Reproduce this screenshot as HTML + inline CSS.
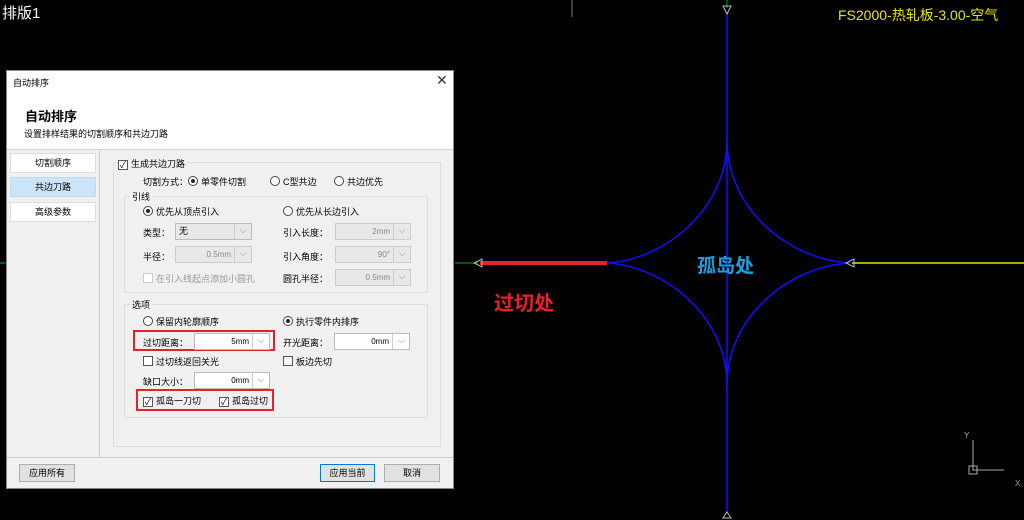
<!DOCTYPE html>
<html><head><meta charset="utf-8"><style>
*{margin:0;padding:0;box-sizing:border-box}
body{width:1024px;height:520px;background:#000;position:relative;overflow:hidden;font-family:"Liberation Sans","Noto Sans CJK SC",sans-serif;font-size:9px;color:#000}
.a{position:absolute;white-space:nowrap}
.sel{position:absolute;height:17px;border:1px solid #bbb;background:#fff;font-size:8px;text-align:right;padding-right:20px;line-height:15px}
.sel.dis{background:#e8e8e8;color:#888;border-color:#ccc}
.sel::after{content:"⌵";position:absolute;right:0;top:0;width:16px;height:15px;border-left:1px solid #ccc;text-align:center;color:#888;font-size:9px;line-height:12px}
.cb{display:inline-block;width:10px;height:10px;border:1px solid #555;background:#fff;vertical-align:-1px;margin-right:3px;font-size:9px;line-height:8px;text-align:center}
.rd{display:inline-block;width:10px;height:10px;border:1px solid #444;border-radius:50%;background:#fff;vertical-align:-1px;margin-right:3px;position:relative}
.rd.on::after{content:"";position:absolute;left:2px;top:2px;width:4px;height:4px;border-radius:50%;background:#222}
.btn{position:absolute;height:18px;border:1px solid #adadad;background:#e1e1e1;text-align:center;line-height:16px;font-size:9px}
.nav{position:absolute;left:10px;width:86px;height:20px;border:1px solid #ddd;background:#fff;text-align:center;line-height:18px}
</style></head><body>
<svg class="a" style="left:0;top:0" width="1024" height="520">
<line x1="0" y1="263" x2="7" y2="263" stroke="#0a0" stroke-width="1"/>
<line x1="455" y1="263" x2="478" y2="263" stroke="#0a0" stroke-width="1"/>
<line x1="572" y1="0" x2="572" y2="17" stroke="#778" stroke-width="1"/>
<line x1="727" y1="0" x2="727" y2="8" stroke="#0a0"/>
<line x1="727" y1="14" x2="727" y2="512" stroke="#1010ff" stroke-width="1.5"/>
<line x1="480" y1="263" x2="607" y2="263" stroke="#e8202a" stroke-width="4"/>
<line x1="852" y1="263" x2="1024" y2="263" stroke="#e6e600" stroke-width="1.5"/>
<path d="M727 140 C727 210 790 260 850 263 C790 266 727 316 727 385 C727 316 664 266 607 263 C664 260 727 210 727 140Z" fill="none" stroke="#1010ff" stroke-width="1.5"/>
<path d="M723 6 L727 14 L731 6Z M723 518 L727 512 L731 518Z M474 263 L482 259 L482 267Z M846 263 L854 259 L854 267Z" fill="none" stroke="#bbb" stroke-width="1"/>
<path d="M973 440 L973 470 L1004 470" fill="none" stroke="#aaa"/>
<rect x="969" y="466" width="8" height="8" fill="none" stroke="#aaa"/>
<text x="964" y="438" fill="#aaa" font-size="8" font-family="Liberation Sans">Y</text>
<text x="1015" y="486" fill="#aaa" font-size="8" font-family="Liberation Sans">X</text>
</svg>
<div class="a" style="left:2px;top:2px;color:#fff;font-size:15px">排版1</div>
<div class="a" style="left:838px;top:5px;color:#e6e600;font-size:14px">FS2000-热轧板-3.00-空气</div>
<div class="a" style="left:697px;top:251px;color:#1aa0e0;font-size:19px;font-weight:bold">孤岛处</div>
<div class="a" style="left:494px;top:287px;color:#e8202a;font-size:20px;font-weight:bold">过切处</div>

<div class="a" style="left:6px;top:70px;width:448px;height:419px;background:#f0f0f0;border:1px solid #888">
 <div class="a" style="left:0;top:0;width:446px;height:79px;background:#fff;border-bottom:1px solid #c8d4e4"></div>
 <div class="a" style="left:6px;top:5px;font-size:9px">自动排序</div>
 <div class="a" style="left:429px;top:1px;font-size:14px;color:#333">✕</div>
 <div class="a" style="left:18px;top:35px;font-size:13px;font-weight:bold">自动排序</div>
 <div class="a" style="left:17px;top:56px;font-size:9px">设置排样结果的切割顺序和共边刀路</div>
 <div class="a" style="left:92px;top:80px;width:1px;height:306px;background:#ccc"></div>
 <div class="a" style="left:0;top:386px;width:446px;height:1px;background:#ccc"></div>
</div>
<div class="nav" style="top:153px">切割顺序</div>
<div class="nav" style="top:177px;background:#cce4f7;border-color:#c4d8ec">共边刀路</div>
<div class="nav" style="top:202px">高级参数</div>

<div class="a" style="left:113px;top:162px;width:328px;height:285px;border:1px solid #ddd"></div>
<div class="a" style="left:118px;top:157px;background:#f0f0f0;padding-right:2px"><span class="cb">✓</span>生成共边刀路</div>
<div class="a" style="left:143px;top:175px">切割方式：<span class="rd on"></span>单零件切割</div>
<div class="a" style="left:270px;top:175px"><span class="rd"></span>C型共边</div>
<div class="a" style="left:334px;top:175px"><span class="rd"></span>共边优先</div>

<div class="a" style="left:124px;top:196px;width:304px;height:97px;border:1px solid #ddd"></div>
<div class="a" style="left:130px;top:190px;background:#f0f0f0;padding:0 2px">引线</div>
<div class="a" style="left:143px;top:205px"><span class="rd on"></span>优先从顶点引入</div>
<div class="a" style="left:283px;top:205px"><span class="rd"></span>优先从长边引入</div>
<div class="a" style="left:143px;top:226px">类型：</div>
<div class="sel" style="left:175px;top:223px;width:77px;text-align:left;padding-left:3px;background:#e8e8e8;font-size:9px">无</div>
<div class="a" style="left:283px;top:226px">引入长度：</div>
<div class="sel dis" style="left:335px;top:223px;width:76px">2mm</div>
<div class="a" style="left:143px;top:250px">半径：</div>
<div class="sel dis" style="left:175px;top:246px;width:77px">0.5mm</div>
<div class="a" style="left:283px;top:250px">引入角度：</div>
<div class="sel dis" style="left:335px;top:246px;width:76px">90°</div>
<div class="a" style="left:143px;top:272px;color:#999"><span class="cb" style="border-color:#ccc"></span>在引入线起点添加小圆孔</div>
<div class="a" style="left:283px;top:272px">圆孔半径：</div>
<div class="sel dis" style="left:335px;top:269px;width:76px">0.5mm</div>

<div class="a" style="left:124px;top:304px;width:304px;height:114px;border:1px solid #ddd"></div>
<div class="a" style="left:130px;top:298px;background:#f0f0f0;padding:0 2px">选项</div>
<div class="a" style="left:143px;top:315px"><span class="rd"></span>保留内轮廓顺序</div>
<div class="a" style="left:283px;top:315px"><span class="rd on"></span>执行零件内排序</div>
<div class="a" style="left:133px;top:330px;width:142px;height:21px;border:2px solid #e8202a"></div>
<div class="a" style="left:143px;top:336px">过切距离：</div>
<div class="sel" style="left:194px;top:333px;width:76px">5mm</div>
<div class="a" style="left:283px;top:336px">开光距离：</div>
<div class="sel" style="left:334px;top:333px;width:76px">0mm</div>
<div class="a" style="left:143px;top:355px"><span class="cb"></span>过切线返回关光</div>
<div class="a" style="left:283px;top:355px"><span class="cb"></span>板边先切</div>
<div class="a" style="left:143px;top:375px">缺口大小：</div>
<div class="sel" style="left:194px;top:372px;width:76px">0mm</div>
<div class="a" style="left:136px;top:389px;width:138px;height:22px;border:2px solid #e8202a"></div>
<div class="a" style="left:143px;top:394px"><span class="cb">✓</span>孤岛一刀切</div>
<div class="a" style="left:219px;top:394px"><span class="cb">✓</span>孤岛过切</div>

<div class="btn" style="left:19px;top:464px;width:56px">应用所有</div>
<div class="btn" style="left:320px;top:464px;width:55px;border-color:#0078d7">应用当前</div>
<div class="btn" style="left:384px;top:464px;width:56px">取消</div>
</body></html>
